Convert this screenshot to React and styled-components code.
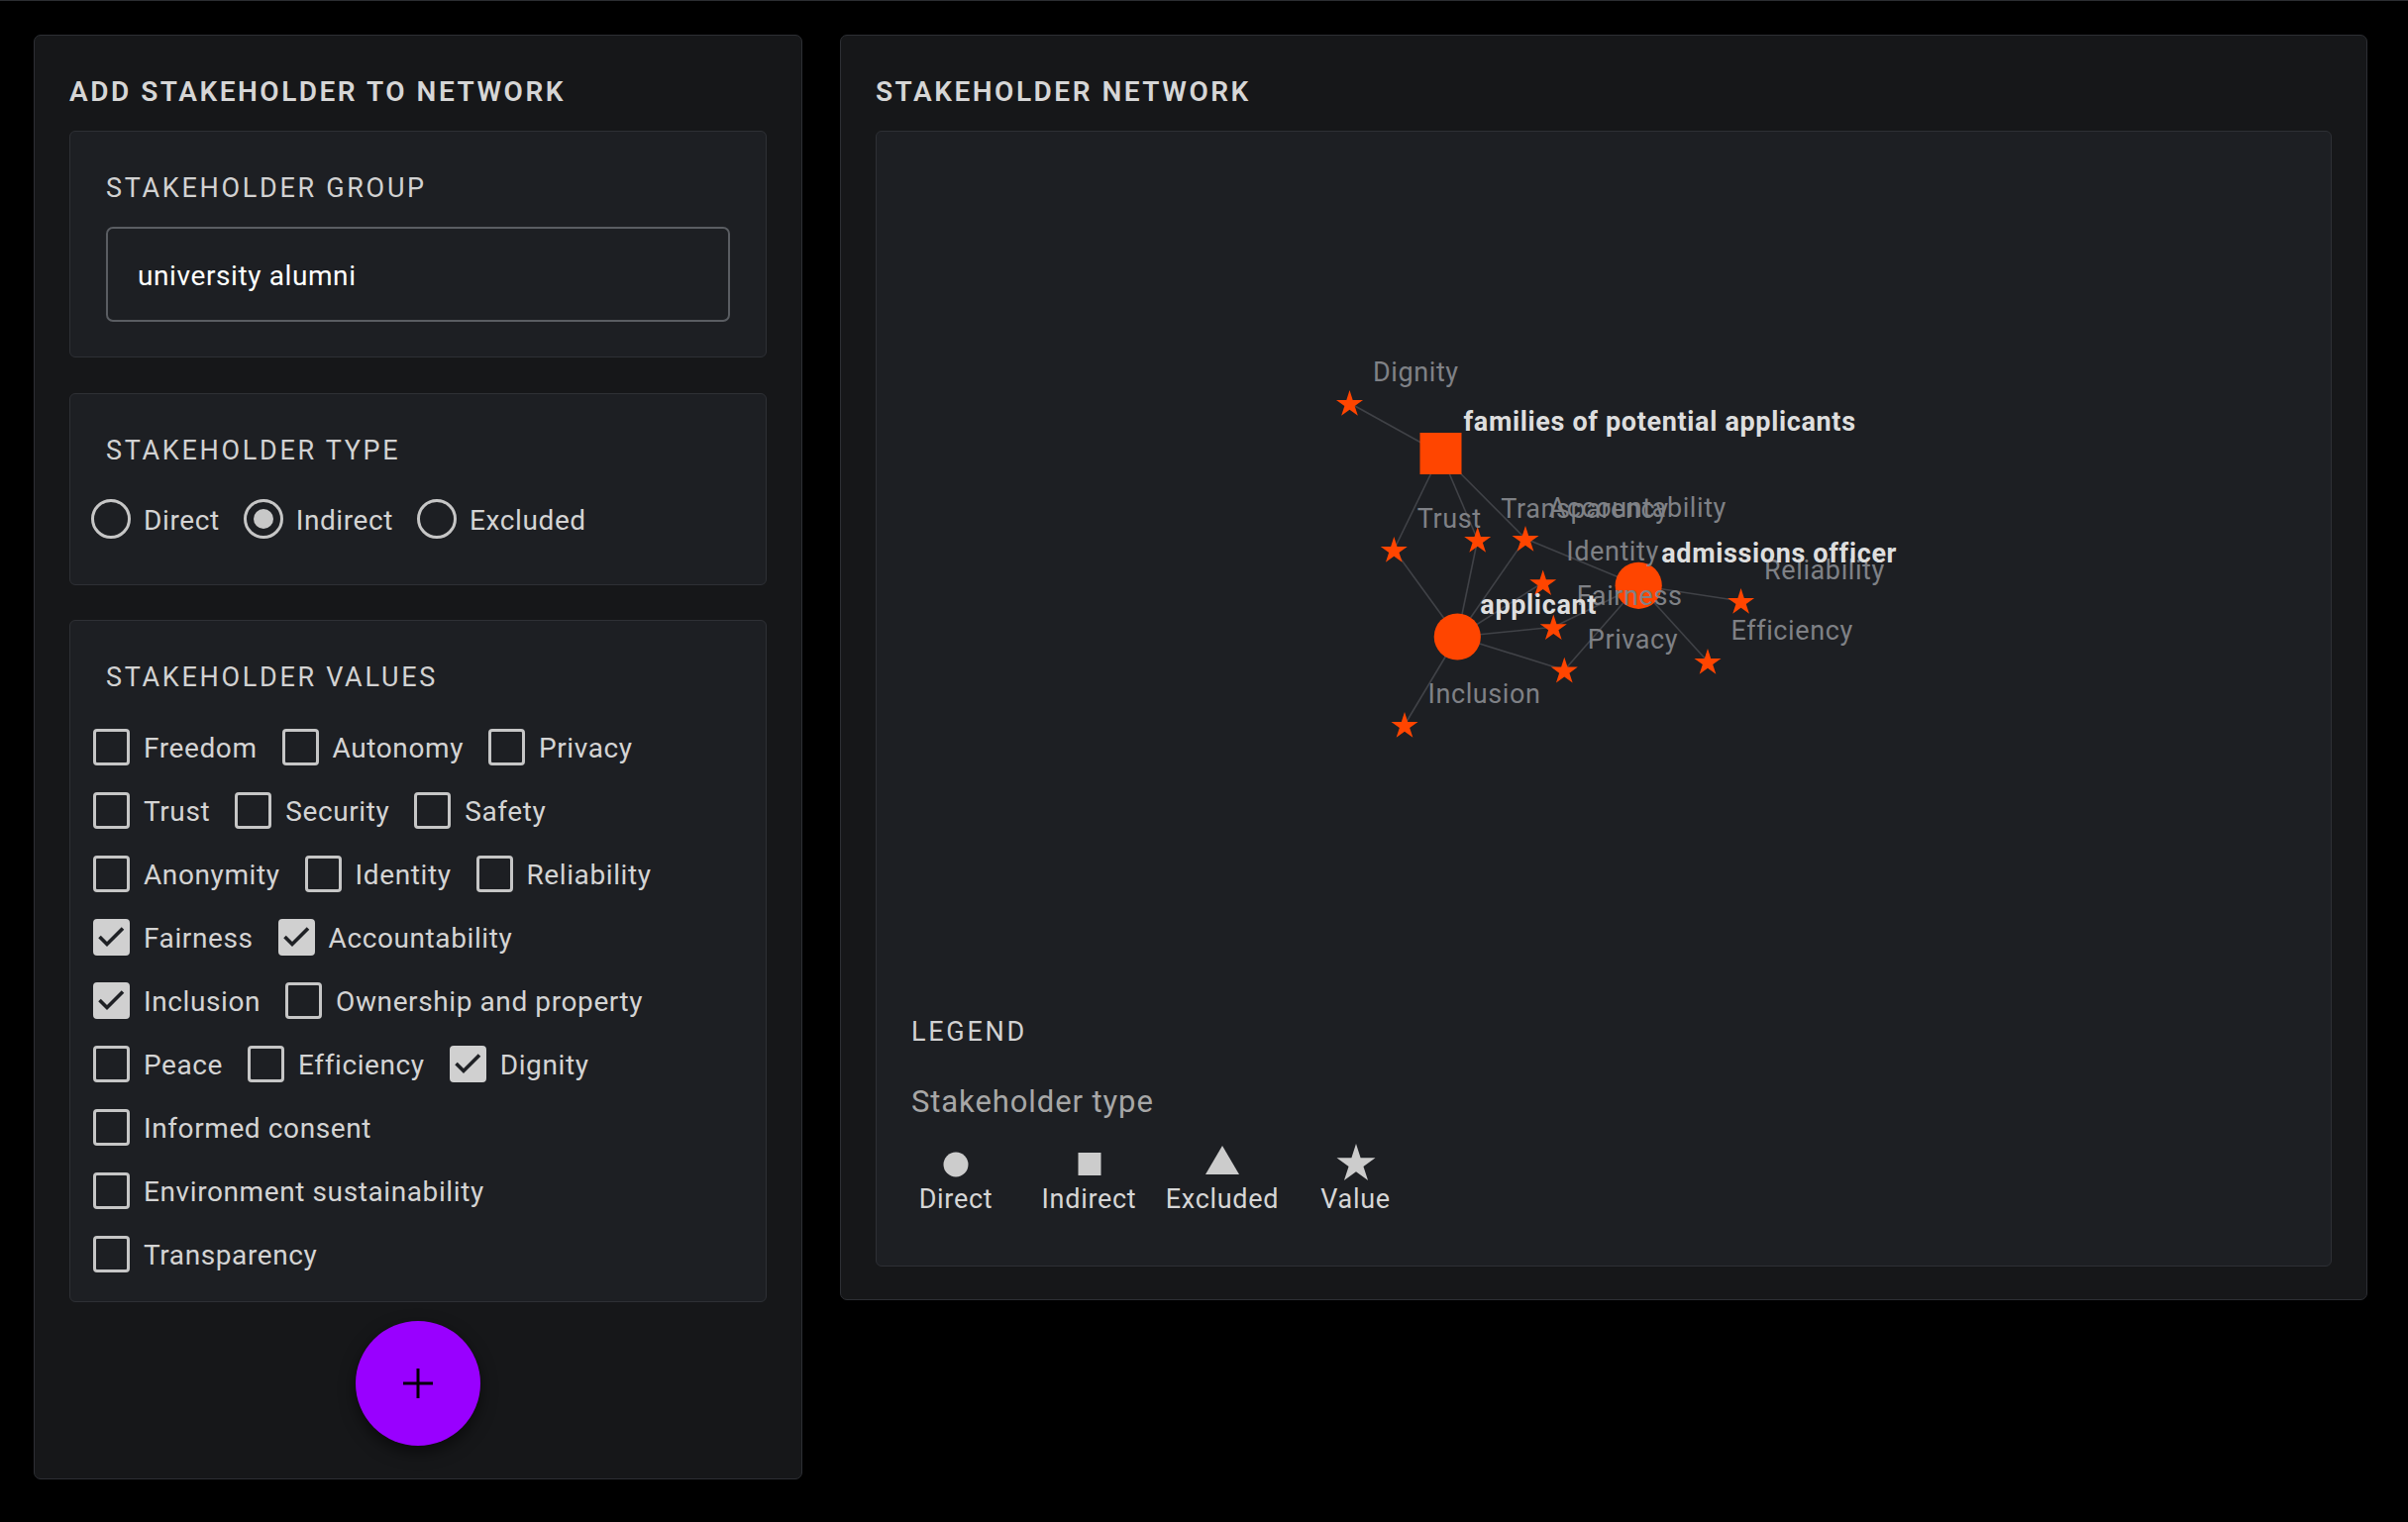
import React from "react";
import styled, { createGlobalStyle } from "styled-components";

const Global = createGlobalStyle`
  html, body { margin: 0; padding: 0; background: #000; }
  body { font-family: Roboto, "Noto Sans", Arial, sans-serif; color: #d4d4d4; }
  * { box-sizing: border-box; }
`;

const Page = styled.div`
  min-height: 1537px;
  border-top: 1px solid #2b2d31;
  padding: 34px 0 0 34px;
  display: flex;
  align-items: flex-start;
  gap: 38px;
`;

const Panel = styled.section`
  width: ${(p) => p.$w}px;
  flex: none;
  background: #161719;
  border: 1px solid #2d2f34;
  border-radius: 7px;
  padding: 40px 35px 33px;
  display: flex;
  flex-direction: column;
`;

const PanelTitle = styled.h2`
  margin: 0 0 22px;
  font-size: 28px;
  line-height: 34px;
  font-weight: 600;
  letter-spacing: 0.09em;
  color: #d6d6d6;
`;

const Card = styled.div`
  background: #1d1f23;
  border: 1px solid #2e3035;
  border-radius: 6px;
  padding: 41px 36px ${(p) => p.$pb}px;
  margin-top: ${(p) => p.$mt}px;
  display: flex;
  flex-direction: column;
`;

const CardLabel = styled.div`
  font-size: 27px;
  line-height: 32px;
  font-weight: 400;
  letter-spacing: 0.1em;
  color: #d2d2d2;
  margin-bottom: 23px;
`;

const TextInput = styled.input`
  display: block;
  width: 100%;
  height: 96px;
  background: #1d1f23;
  border: 2px solid #5a5d62;
  border-radius: 7px;
  padding: 2px 30px 0;
  font-family: Roboto, "Noto Sans", sans-serif;
  font-size: 28px;
  letter-spacing: 0.6px;
  color: #ffffff;
  outline: none;
`;

const RadioRow = styled.div`
  height: 60px;
  margin-left: -15px;
  display: flex;
  align-items: center;
  gap: 24px;
`;

const OptionItem = styled.label`
  display: flex;
  align-items: center;
  gap: ${(p) => p.$gap}px;
  white-space: nowrap;
`;

const RadioCircle = styled.span`
  width: 40px;
  height: 40px;
  flex: none;
  border-radius: 50%;
  border: 3px solid #c6c6c6;
  display: flex;
  align-items: center;
  justify-content: center;
  &::after {
    content: "";
    width: 20px;
    height: 20px;
    border-radius: 50%;
    background: #c8c8c8;
    display: ${(p) => (p.$on ? "block" : "none")};
  }
`;

const OptionText = styled.span`
  font-size: 28px;
  line-height: 32px;
  padding-top: 3px;
  letter-spacing: 0.6px;
  color: #d4d4d4;
`;

const CheckGrid = styled.div`
  margin: 13px 0 0 -13px;
  display: flex;
  flex-direction: column;
  gap: 27px;
`;

const CheckRow = styled.div`
  display: flex;
  align-items: center;
  gap: 25px;
  height: 37px;
`;

const Box = styled.span`
  width: 37px;
  height: 37px;
  flex: none;
  border-radius: 4px;
  border: 3px solid ${(p) => (p.$on ? "#d0d0d0" : "#c6c6c6")};
  background: ${(p) => (p.$on ? "#d0d0d0" : "transparent")};
  display: flex;
  align-items: center;
  justify-content: center;
  svg { display: block; }
`;

const AddButton = styled.button`
  align-self: center;
  margin-top: 19px;
  width: 126px;
  height: 126px;
  border-radius: 50%;
  border: none;
  background: #9900ff;
  box-shadow: 0 6px 16px rgba(0, 0, 0, 0.55);
  display: flex;
  align-items: center;
  justify-content: center;
  padding: 0;
  cursor: pointer;
`;

const Canvas = styled.div`
  height: 1147px;
  background: #1d1f23;
  border: 1px solid #2e3035;
  border-radius: 6px;
  display: flex;
  flex-direction: column;
`;

const GraphSvg = styled.svg`
  display: block;
  flex: 1;
  width: 100%;
  overflow: visible;
`;

const Edge = styled.line`
  stroke: #404247;
  stroke-width: 1.6;
`;

const NodeLabel = styled.text`
  font-family: Roboto, "Noto Sans", sans-serif;
  font-size: 27px;
  letter-spacing: ${(p) => (p.$bold ? 0.65 : 0.6)}px;
  font-weight: ${(p) => (p.$bold ? 700 : 400)};
  fill: ${(p) => (p.$bold ? "#dedede" : "#7f8186")};
`;

const Legend = styled.div`
  padding: 0 35px 51px;
`;

const LegendTitle = styled.div`
  font-size: 27px;
  line-height: 32px;
  letter-spacing: 0.1em;
  color: #d2d2d2;
  margin-bottom: 37px;
`;

const LegendSub = styled.div`
  font-size: 31px;
  line-height: 36px;
  letter-spacing: 0.9px;
  color: #a7a7a7;
  margin-bottom: 24px;
`;

const LegendItems = styled.div`
  display: grid;
  grid-template-columns: repeat(4, 90px);
  column-gap: 44.5px;
`;

const LegendItem = styled.div`
  display: flex;
  flex-direction: column;
  align-items: center;
  svg { display: block; }
`;

const LegendLabel = styled.div`
  font-size: 27px;
  line-height: 32px;
  letter-spacing: 0.7px;
  color: #d6d6d6;
  white-space: nowrap;
`;

const ORANGE = "#ff4500";

function starPoints(cx, cy, r) {
  const inner = r * 0.381966;
  const pts = [];
  for (let i = 0; i < 10; i++) {
    const rad = i % 2 === 0 ? r : inner;
    const a = -Math.PI / 2 + (i * Math.PI) / 5;
    pts.push(`${(cx + rad * Math.cos(a)).toFixed(2)},${(cy + rad * Math.sin(a)).toFixed(2)}`);
  }
  return pts.join(" ");
}

const valueNodes = {
  Dignity: [477.5, 274],
  Trust: [522.3, 422],
  Transparency: [606.7, 412],
  Accountability: [655, 411],
  Identity: [672.7, 455.3],
  Reliability: [872.6, 474],
  Efficiency: [839, 535],
  Fairness: [683.3, 500.3],
  Privacy: [694.3, 543.7],
  Inclusion: [533, 599],
};

const stakeholders = {
  families: { label: "families of potential applicants", shape: "square", x: 569.5, y: 325 },
  applicant: { label: "applicant", shape: "circle", x: 586.3, y: 510 },
  admissions: { label: "admissions officer", shape: "circle", x: 769.2, y: 458.3 },
};

const links = [
  ["families", "Dignity"],
  ["families", "Trust"],
  ["families", "Transparency"],
  ["families", "Accountability"],
  ["applicant", "Trust"],
  ["applicant", "Transparency"],
  ["applicant", "Accountability"],
  ["applicant", "Identity"],
  ["applicant", "Fairness"],
  ["applicant", "Privacy"],
  ["applicant", "Inclusion"],
  ["admissions", "Accountability"],
  ["admissions", "Fairness"],
  ["admissions", "Privacy"],
  ["admissions", "Reliability"],
  ["admissions", "Efficiency"],
];

const checkRows = [
  [["Freedom"], ["Autonomy"], ["Privacy"]],
  [["Trust"], ["Security"], ["Safety"]],
  [["Anonymity"], ["Identity"], ["Reliability"]],
  [["Fairness", true], ["Accountability", true]],
  [["Inclusion", true], ["Ownership and property"]],
  [["Peace"], ["Efficiency"], ["Dignity", true]],
  [["Informed consent"]],
  [["Environment sustainability"]],
  [["Transparency"]],
];

function Graph() {
  return (
    <GraphSvg>
      {links.map(([s, v]) => {
        const a = stakeholders[s];
        const b = valueNodes[v];
        return <Edge key={s + v} x1={a.x} y1={a.y} x2={b[0]} y2={b[1]} />;
      })}
      {Object.entries(valueNodes).map(([k, [x, y]]) => (
        <polygon key={k} points={starPoints(x, y + 1.3, 14.2)} fill={ORANGE} />
      ))}
      {Object.entries(stakeholders).map(([k, n]) =>
        n.shape === "square" ? (
          <rect key={k} x={n.x - 21} y={n.y - 21} width="42" height="42" fill={ORANGE} />
        ) : (
          <circle key={k} cx={n.x} cy={n.y} r="23.6" fill={ORANGE} />
        )
      )}
      {Object.entries(valueNodes).map(([k, [x, y]]) => (
        <NodeLabel key={k} x={x + 23.5} y={y - 22}>
          {k}
        </NodeLabel>
      ))}
      {Object.entries(stakeholders).map(([k, n]) => (
        <NodeLabel key={k} $bold x={n.x + 23} y={n.y - 23}>
          {n.label}
        </NodeLabel>
      ))}
    </GraphSvg>
  );
}

const legendIcons = {
  Direct: <circle cx="20" cy="21" r="12.5" fill="#cccccc" />,
  Indirect: <rect x="8.5" y="9" width="23" height="23" fill="#cccccc" />,
  Excluded: <polygon points="20,2 37,31 3,31" fill="#cccccc" />,
  Value: <polygon points={starPoints(20, 20.5, 20.5)} fill="#cccccc" />,
};

export default function App() {
  return (
    <>
      <Global />
      <Page>
        <Panel $w={776}>
          <PanelTitle>ADD STAKEHOLDER TO NETWORK</PanelTitle>
          <Card $mt={0} $pb={35}>
            <CardLabel>STAKEHOLDER GROUP</CardLabel>
            <TextInput defaultValue="university alumni" />
          </Card>
          <Card $mt={36} $pb={36}>
            <CardLabel>STAKEHOLDER TYPE</CardLabel>
            <RadioRow>
              {["Direct", "Indirect", "Excluded"].map((t) => (
                <OptionItem key={t} $gap={13}>
                  <RadioCircle $on={t === "Indirect"} />
                  <OptionText>{t}</OptionText>
                </OptionItem>
              ))}
            </RadioRow>
          </Card>
          <Card $mt={35} $pb={29}>
            <CardLabel>STAKEHOLDER VALUES</CardLabel>
            <CheckGrid>
              {checkRows.map((row, i) => (
                <CheckRow key={i}>
                  {row.map(([t, on]) => (
                    <OptionItem key={t} $gap={14}>
                      <Box $on={on}>
                        {on && (
                          <svg width="31" height="31" viewBox="0 0 31 31">
                            <polyline
                              points="3.5,15 11,22.5 27,6.5"
                              fill="none"
                              stroke="#1f2125"
                              strokeWidth="3.6"
                            />
                          </svg>
                        )}
                      </Box>
                      <OptionText>{t}</OptionText>
                    </OptionItem>
                  ))}
                </CheckRow>
              ))}
            </CheckGrid>
          </Card>
          <AddButton aria-label="Add stakeholder">
            <svg width="30" height="30" viewBox="0 0 30 30">
              <line x1="15" y1="0" x2="15" y2="30" stroke="#000" strokeWidth="3" />
              <line x1="0" y1="15" x2="30" y2="15" stroke="#000" strokeWidth="3" />
            </svg>
          </AddButton>
        </Panel>
        <Panel $w={1542}>
          <PanelTitle>STAKEHOLDER NETWORK</PanelTitle>
          <Canvas>
            <Graph />
            <Legend>
              <LegendTitle>LEGEND</LegendTitle>
              <LegendSub>Stakeholder type</LegendSub>
              <LegendItems>
                {Object.entries(legendIcons).map(([k, icon]) => (
                  <LegendItem key={k}>
                    <svg width="40" height="40" viewBox="0 0 40 40">
                      {icon}
                    </svg>
                    <LegendLabel>{k}</LegendLabel>
                  </LegendItem>
                ))}
              </LegendItems>
            </Legend>
          </Canvas>
        </Panel>
      </Page>
    </>
  );
}
